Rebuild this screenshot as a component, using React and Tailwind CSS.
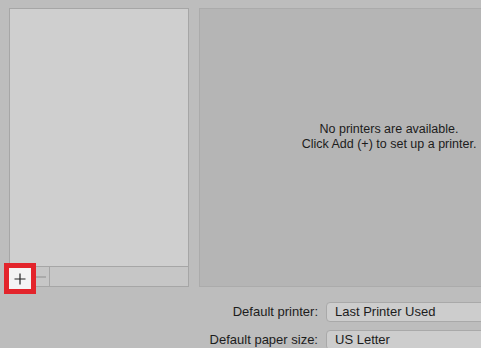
export default function App() {
  return (
    <div
      className="relative w-[481px] h-[348px] overflow-hidden bg-[#bdbdbd] text-[#1c1c1c]"
      style={{ fontFamily: '"Liberation Sans", Arial, sans-serif' }}
    >
      <div className="flex gap-[10px] pl-[9px] pt-[8px]">
        <div className="flex flex-col w-[180px] shrink-0">
          <div className="h-[259px] bg-[#cfcfcf] border border-[#a6a6a6]" />
          <div className="h-[20px] flex bg-[#c6c6c6] border border-t-0 border-[#a6a6a6]">
            <div className="w-[21px] flex items-center justify-center text-[#222]">
              <svg width="12" height="12" viewBox="0 0 12 12">
                <path d="M6 0.5V11.5M0.5 6H11.5" stroke="#222" strokeWidth="1.2" />
              </svg>
            </div>
            <div className="w-[19px] flex items-center justify-center border-r border-[#a6a6a6]">
              <svg width="11" height="2" viewBox="0 0 11 2">
                <path d="M0 1H11" stroke="#8e8e8e" strokeWidth="1" />
              </svg>
            </div>
            <div className="flex-1" />
          </div>
        </div>
        <div className="w-[380px] shrink-0 h-[279px] bg-[#b5b5b5] border border-[#ababab] flex flex-col items-center justify-center text-[12.5px] leading-[15px] pb-[22px]">
          <div>No printers are available.</div>
          <div>Click Add (+) to set up a printer.</div>
        </div>
      </div>

      <div className="mt-[15px] grid grid-cols-[318px_200px] gap-x-[8px] gap-y-[8px] text-[13px]">
        <div className="h-[20px] flex items-center justify-end">Default printer:</div>
        <div className="h-[20px] flex items-center pl-[8px] bg-[#cdcdcd] border border-[#a9a9a9] rounded-[4px]">
          Last Printer Used
        </div>
        <div className="h-[20px] flex items-center justify-end">Default paper size:</div>
        <div className="h-[20px] flex items-center pl-[8px] bg-[#cdcdcd] border border-[#a9a9a9] rounded-[4px]">
          US Letter
        </div>
      </div>

      <div className="absolute left-[4px] top-[263px] w-[32px] h-[31px] border-[5px] border-[#e3242b] bg-[#f4f4f4] flex items-center justify-center">
        <svg width="12" height="12" viewBox="0 0 12 12">
          <path d="M6 0.5V11.5M0.5 6H11.5" stroke="#222" strokeWidth="1.2" />
        </svg>
      </div>
    </div>
  );
}
